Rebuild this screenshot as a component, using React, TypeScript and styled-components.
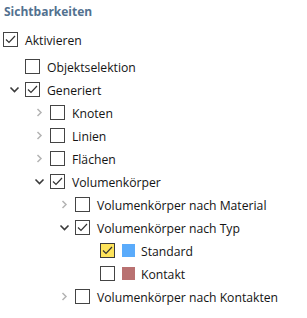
import React from "react";
import styled, { createGlobalStyle } from "styled-components";

const Global = createGlobalStyle`
  html, body { margin: 0; padding: 0; background: #ffffff; }
  body { font-family: "Open Sans", "Noto Sans", sans-serif; }
`;

const Panel = styled.div`
  width: 307px;
  height: 318px;
  background: #ffffff;
  display: flex;
  flex-direction: column;
  color: #141414;
  font-size: 12.2px;
`;

const Title = styled.div`
  height: 22px;
  display: flex;
  align-items: center;
  padding-left: 4px;
  font-weight: 700;
  font-size: 12px;
  color: #52718f;
`;

const TopRow = styled.div`
  height: 23px;
  margin-top: 6px;
  margin-bottom: 4px;
  display: flex;
  align-items: center;
  padding-left: 3px;
`;

const List = styled.div`
  display: flex;
  flex-direction: column;
`;

const Row = styled.div<{ $level: number }>`
  height: 23px;
  display: flex;
  align-items: center;
  padding-left: ${(p) => 3 + (p.$level - 1) * 25}px;
`;

const Expander = styled.div`
  width: 22px;
  height: 23px;
  display: flex;
  align-items: center;
  justify-content: center;
  flex-shrink: 0;
`;

const Box = styled.div<{ $highlight?: boolean }>`
  width: 15px;
  height: 15px;
  box-sizing: border-box;
  border: 1px solid ${(p) => (p.$highlight ? "#3a3a3a" : "#444444")};
  background: ${(p) => (p.$highlight ? "#fde35b" : "#ffffff")};
  display: flex;
  align-items: center;
  justify-content: center;
  flex-shrink: 0;
`;

const Swatch = styled.div<{ $color: string }>`
  width: 13px;
  height: 13px;
  background: ${(p) => p.$color};
  margin-left: 7px;
  flex-shrink: 0;
`;

const Label = styled.span<{ $swatch?: boolean }>`
  margin-left: ${(p) => (p.$swatch ? 6 : 7)}px;
  white-space: nowrap;
  padding-top: 1px;
`;

type Node = {
  label: string;
  level: number;
  expander?: "open" | "closed";
  checked?: boolean;
  highlight?: boolean;
  swatch?: string;
};

const nodes: Node[] = [
  { label: "Objektselektion", level: 1 },
  { label: "Generiert", level: 1, expander: "open", checked: true },
  { label: "Knoten", level: 2, expander: "closed" },
  { label: "Linien", level: 2, expander: "closed" },
  { label: "Flächen", level: 2, expander: "closed" },
  { label: "Volumenkörper", level: 2, expander: "open", checked: true },
  { label: "Volumenkörper nach Material", level: 3, expander: "closed" },
  { label: "Volumenkörper nach Typ", level: 3, expander: "open", checked: true },
  { label: "Standard", level: 4, checked: true, highlight: true, swatch: "#5aabfb" },
  { label: "Kontakt", level: 4, swatch: "#b97171" },
  { label: "Volumenkörper nach Kontakten", level: 3, expander: "closed" },
];

const Check = () => (
  <svg width="13" height="13" viewBox="0 0 13 13">
    <polyline points="2,6.5 5,9.5 11,3" fill="none" stroke="#333" strokeWidth="1.2" />
  </svg>
);

const Chevron = ({ open }: { open: boolean }) =>
  open ? (
    <svg width="11" height="11" viewBox="0 0 11 11">
      <polyline points="1.5,3.5 5.5,7.5 9.5,3.5" fill="none" stroke="#3a3a3a" strokeWidth="1.6" />
    </svg>
  ) : (
    <svg width="11" height="11" viewBox="0 0 11 11">
      <polyline points="3.5,2 7,5.5 3.5,9" fill="none" stroke="#b4b4b4" strokeWidth="1.5" />
    </svg>
  );

export default function App() {
  return (
    <Panel>
      <Global />
      <Title>Sichtbarkeiten</Title>
      <TopRow>
        <Box>
          <Check />
        </Box>
        <Label>Aktivieren</Label>
      </TopRow>
      <List>
        {nodes.map((n) => (
          <Row key={n.label} $level={n.level}>
            <Expander>{n.expander && <Chevron open={n.expander === "open"} />}</Expander>
            <Box $highlight={n.highlight}>{n.checked && <Check />}</Box>
            {n.swatch && <Swatch $color={n.swatch} />}
            <Label $swatch={!!n.swatch}>{n.label}</Label>
          </Row>
        ))}
      </List>
    </Panel>
  );
}
